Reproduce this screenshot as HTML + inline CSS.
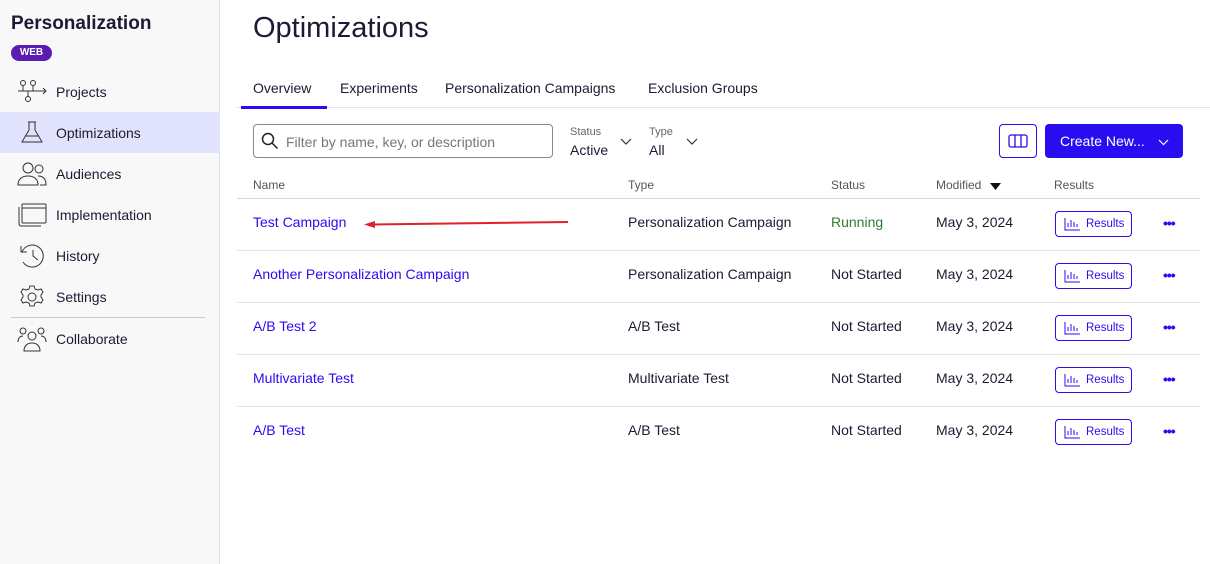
<!DOCTYPE html>
<html><head><meta charset="utf-8"><style>
*{box-sizing:border-box;margin:0;padding:0}
body{width:1210px;height:564px;overflow:hidden;background:#fff;font-family:"Liberation Sans",sans-serif;color:#1b1b33;position:relative}
.a{position:absolute;white-space:nowrap}
#side{position:absolute;left:0;top:0;width:220px;height:564px;background:#f8f8f8;border-right:1px solid #e2e2e8}
.nav{position:absolute;left:0;width:220px;height:41px;font-size:14px;line-height:42px;padding-left:56px}
.nav svg{position:absolute;left:17px;top:8px}
.sel{background:#e0e3fb}
.lnk{color:#2a0cf0}
.rb{position:absolute;left:1055px;width:77px;height:26px;border:1px solid #2a0cf0;border-radius:4px;color:#2a0cf0;font-size:11.5px;line-height:25px;padding-left:30px}
.rb svg{position:absolute;left:8px;top:5px}
.dots{position:absolute;left:1163px;color:#2a0cf0;font-size:14px;font-weight:bold;letter-spacing:-1px}
.hr{position:absolute;left:237px;width:963px;height:1px;background:#e3e3e8}
.cell{position:absolute;font-size:14px;white-space:nowrap}
</style></head><body>
<div id="side">
<div class="a" style="left:11px;top:13px;font-size:19px;font-weight:bold;color:#1b1b33">Personalization</div>
<div class="a" style="left:11px;top:45px;width:41px;height:16px;background:#5a1cb3;border-radius:8px;color:#fff;font-size:10px;font-weight:bold;text-align:center;line-height:16px">WEB</div>
<div class="nav" style="top:71px"><svg width="30" height="26" viewBox="0 0 30 26" fill="none" stroke="#333" stroke-width="1"><circle cx="6" cy="4" r="2.5"/><circle cx="16" cy="4" r="2.5"/><circle cx="11" cy="20" r="2.5"/><path d="M1 12h28M26 9l3 3-3 3M6 6.5V12M16 6.5V12M11 12v5.5"/></svg>Projects</div>
<div class="nav sel" style="top:112px"><svg width="30" height="26" viewBox="0 0 30 26" fill="none" stroke="#333" stroke-width="1"><path d="M11 2h8M12 2v8L5 22h20L18 10V2M9 16h12"/></svg>Optimizations</div>
<div class="nav" style="top:153px"><svg width="30" height="26" viewBox="0 0 30 26" fill="none" stroke="#333" stroke-width="1"><circle cx="11" cy="7" r="5"/><circle cx="22" cy="8" r="4"/><path d="M1 24c0-6 4-9 10-9s10 3 10 9zM21 15c5 0 8 3 8 9h-6"/></svg>Audiences</div>
<div class="nav" style="top:194px"><svg width="30" height="26" viewBox="0 0 30 26" fill="none" stroke="#333" stroke-width="1"><rect x="5" y="2" width="24" height="19" rx="1"/><path d="M5 6h24M2 5v17c0 1 1 2 2 2h20"/></svg>Implementation</div>
<div class="nav" style="top:235px"><svg width="30" height="26" viewBox="0 0 30 26" fill="none" stroke="#333" stroke-width="1"><path d="M5 9a11 11 0 1 1 1 10M4 3v6h6M16 7v6l5 4"/></svg>History</div>
<div class="nav" style="top:276px"><svg width="30" height="26" viewBox="0 0 30 26" fill="none" stroke="#333" stroke-width="1"><circle cx="15" cy="13" r="4"/><path d="M13 2h4l1 3 3 1 3-1 2 3-2 3v2l2 3-2 3-3-1-3 1-1 3h-4l-1-3-3-1-3 1-2-3 2-3v-2l-2-3 2-3 3 1 3-1z"/></svg>Settings</div>
<div class="a" style="left:11px;top:317px;width:194px;height:1px;background:#ccc"></div>
<div class="nav" style="top:318px"><svg width="30" height="26" viewBox="0 0 30 26" fill="none" stroke="#333" stroke-width="1"><circle cx="15" cy="10" r="4"/><circle cx="6" cy="5" r="3"/><circle cx="24" cy="5" r="3"/><path d="M7 25c0-5 3-8 8-8s8 3 8 8zM1 16c0-4 2-6 5-6M29 16c0-4-2-6-5-6"/></svg>Collaborate</div>
</div>

<div class="a" style="left:253px;top:12px;font-size:29px;color:#1b1b33">Optimizations</div>
<div class="a" style="left:253px;top:80px;font-size:14px">Overview</div>
<div class="a" style="left:340px;top:80px;font-size:14px">Experiments</div>
<div class="a" style="left:445px;top:80px;font-size:14px">Personalization Campaigns</div>
<div class="a" style="left:648px;top:80px;font-size:14px">Exclusion Groups</div>
<div class="a" style="left:237px;top:107px;width:973px;height:1px;background:#e6e6ea"></div>
<div class="a" style="left:241px;top:106px;width:86px;height:3px;background:#2a0cf0"></div>

<div class="a" style="left:253px;top:124px;width:300px;height:34px;border:1px solid #888;border-radius:4px"></div>
<svg class="a" style="left:261px;top:132px" width="18" height="18" viewBox="0 0 18 18" fill="none" stroke="#222" stroke-width="1.5"><circle cx="7" cy="7" r="5.5"/><path d="M11 11l5.5 5.5"/></svg>
<div class="a" style="left:286px;top:134px;font-size:14px;color:#777">Filter by name, key, or description</div>
<div class="a" style="left:570px;top:126px;font-size:11px;color:#666">Status</div>
<div class="a" style="left:570px;top:142px;font-size:14px">Active</div>
<svg class="a" style="left:620px;top:138px" width="12" height="8" fill="none" stroke="#333" stroke-width="1.2"><path d="M1 1l5 5 5-5"/></svg>
<div class="a" style="left:649px;top:126px;font-size:11px;color:#666">Type</div>
<div class="a" style="left:649px;top:142px;font-size:14px">All</div>
<svg class="a" style="left:686px;top:138px" width="12" height="8" fill="none" stroke="#333" stroke-width="1.2"><path d="M1 1l5 5 5-5"/></svg>

<div class="a" style="left:999px;top:124px;width:38px;height:34px;border:1px solid #2a0cf0;border-radius:4px"></div>
<svg class="a" style="left:1008px;top:134px" width="20" height="14" fill="none" stroke="#2a0cf0" stroke-width="1.3"><rect x="1" y="1" width="18" height="12" rx="2"/><path d="M7 1v12M13 1v12"/></svg>
<div class="a" style="left:1045px;top:124px;width:138px;height:34px;background:#2a0cf0;border-radius:4px;color:#fff;font-size:14px;line-height:34px;padding-left:15px">Create New...</div>
<svg class="a" style="left:1158px;top:139px" width="11" height="7" fill="none" stroke="#fff" stroke-width="1.2"><path d="M1 1l4.5 4.5L10 1"/></svg>

<div class="cell" style="left:253px;top:178px;font-size:12px;color:#555">Name</div>
<div class="cell" style="left:628px;top:178px;font-size:12px;color:#555">Type</div>
<div class="cell" style="left:831px;top:178px;font-size:12px;color:#555">Status</div>
<div class="cell" style="left:936px;top:178px;font-size:12px;color:#555">Modified</div>
<svg class="a" style="left:990px;top:183px" width="11" height="7"><path d="M0 0h11L5.5 7z" fill="#111"/></svg>
<div class="cell" style="left:1054px;top:178px;font-size:12px;color:#555">Results</div>
<div class="hr" style="top:198px;background:#d5d5da"></div>

<div class="cell lnk" style="left:253px;top:214px">Test Campaign</div>
<svg class="a" style="left:363px;top:218px" width="206" height="12"><path d="M10 6.5L205 4" stroke="#e0202a" stroke-width="2"/><path d="M1 6.5l11-3.5v7z" fill="#e0202a"/></svg>
<div class="cell" style="left:628px;top:214px">Personalization Campaign</div>
<div class="cell" style="left:831px;top:214px;color:#2e7d32">Running</div>
<div class="cell" style="left:936px;top:214px">May 3, 2024</div>
<div class="hr" style="top:250px"></div>

<div class="cell lnk" style="left:253px;top:266px">Another Personalization Campaign</div>
<div class="cell" style="left:628px;top:266px">Personalization Campaign</div>
<div class="cell" style="left:831px;top:266px">Not Started</div>
<div class="cell" style="left:936px;top:266px">May 3, 2024</div>
<div class="hr" style="top:302px"></div>

<div class="cell lnk" style="left:253px;top:318px">A/B Test 2</div>
<div class="cell" style="left:628px;top:318px">A/B Test</div>
<div class="cell" style="left:831px;top:318px">Not Started</div>
<div class="cell" style="left:936px;top:318px">May 3, 2024</div>
<div class="hr" style="top:354px"></div>

<div class="cell lnk" style="left:253px;top:370px">Multivariate Test</div>
<div class="cell" style="left:628px;top:370px">Multivariate Test</div>
<div class="cell" style="left:831px;top:370px">Not Started</div>
<div class="cell" style="left:936px;top:370px">May 3, 2024</div>
<div class="hr" style="top:406px"></div>

<div class="cell lnk" style="left:253px;top:422px">A/B Test</div>
<div class="cell" style="left:628px;top:422px">A/B Test</div>
<div class="cell" style="left:831px;top:422px">Not Started</div>
<div class="cell" style="left:936px;top:422px">May 3, 2024</div>

<div class="rb" style="top:211px"><svg width="16" height="14" fill="none" stroke="#2a0cf0" stroke-width="1"><path d="M1 1v12h15M4 10V6M7 10V3M10 10V5M13 10V7"/></svg>Results</div>
<div class="rb" style="top:263px"><svg width="16" height="14" fill="none" stroke="#2a0cf0" stroke-width="1"><path d="M1 1v12h15M4 10V6M7 10V3M10 10V5M13 10V7"/></svg>Results</div>
<div class="rb" style="top:315px"><svg width="16" height="14" fill="none" stroke="#2a0cf0" stroke-width="1"><path d="M1 1v12h15M4 10V6M7 10V3M10 10V5M13 10V7"/></svg>Results</div>
<div class="rb" style="top:367px"><svg width="16" height="14" fill="none" stroke="#2a0cf0" stroke-width="1"><path d="M1 1v12h15M4 10V6M7 10V3M10 10V5M13 10V7"/></svg>Results</div>
<div class="rb" style="top:419px"><svg width="16" height="14" fill="none" stroke="#2a0cf0" stroke-width="1"><path d="M1 1v12h15M4 10V6M7 10V3M10 10V5M13 10V7"/></svg>Results</div>
<div class="dots" style="top:215px">•••</div>
<div class="dots" style="top:267px">•••</div>
<div class="dots" style="top:319px">•••</div>
<div class="dots" style="top:371px">•••</div>
<div class="dots" style="top:423px">•••</div>
</body></html>
